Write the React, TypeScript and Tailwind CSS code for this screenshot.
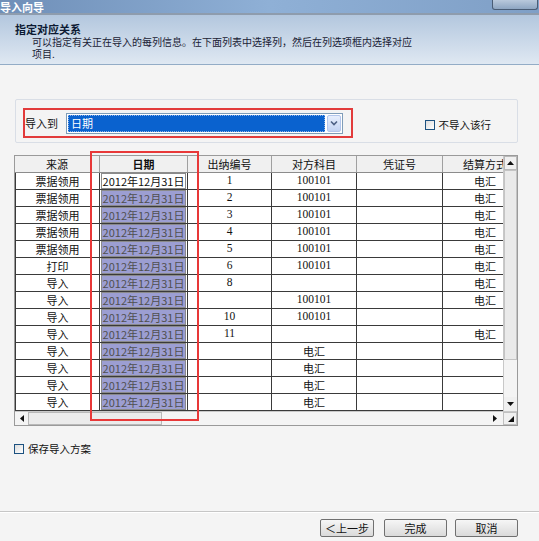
import React from "react";

const CJK = "font-['Noto_Sans_CJK_SC','Liberation_Sans',sans-serif]";
const SERIF = "font-['Liberation_Serif','Noto_Sans_CJK_SC',serif]";

type Row = [string, string, string, string];
const rows: Row[] = [
  ["票据领用", "1", "100101", "电汇"],
  ["票据领用", "2", "100101", "电汇"],
  ["票据领用", "3", "100101", "电汇"],
  ["票据领用", "4", "100101", "电汇"],
  ["票据领用", "5", "100101", "电汇"],
  ["打印", "6", "100101", "电汇"],
  ["导入", "8", "", "电汇"],
  ["导入", "", "100101", "电汇"],
  ["导入", "10", "100101", ""],
  ["导入", "11", "", "电汇"],
  ["导入", "", "电汇", ""],
  ["导入", "", "电汇", ""],
  ["导入", "", "电汇", ""],
  ["导入", "", "电汇", ""],
];

function Val({ v }: { v: string }) {
  const num = /^[0-9]+$/.test(v);
  return <span className={num ? `${SERIF} text-[11.5px]` : `${CJK} text-[11px]`}>{v}</span>;
}

function Check({ label }: { label: string }) {
  return (
    <div className="flex items-center gap-[4px]">
      <div className="w-[10px] h-[10px] border border-[#1c5180] bg-gradient-to-br from-[#dcdcdc] to-[#ffffff]" />
      <span className={`${CJK} text-[10.5px] text-[#111] leading-none`}>{label}</span>
    </div>
  );
}

function Btn({ label, w, className = "" }: { label: string; w: string; className?: string }) {
  return (
    <div
      className={`${w} h-[18px] border border-[#707070] rounded-[2px] bg-gradient-to-b from-[#f6f6f6] to-[#dadada] flex items-center justify-center ${className}`}
    >
      <span className={`${CJK} text-[11px] text-[#111] leading-none`}>{label}</span>
    </div>
  );
}

export default function App() {
  return (
    <div className={`relative w-[539px] h-[541px] overflow-hidden bg-[#f4f4f4] flex flex-col ${CJK}`}>
      {/* Title bar */}
      <div className="h-[13px] flex items-end justify-between bg-gradient-to-r from-[#6f8fb8] via-[#8fb0d6] to-[#7f9fc6] overflow-hidden">
        <span className={`${CJK} text-[11px] font-bold text-white leading-[12px]`}>导入向导</span>
        <div className="self-start w-[46px] h-[10px] mr-[1px] border border-[#4a5d75] border-t-0 rounded-b-[3px] bg-gradient-to-b from-[#b9c9dc] to-[#8ea6c2]" />
      </div>
      <div className="h-[2px] bg-[#8e9cad]" />
      {/* Header */}
      <div className="h-[50px] bg-gradient-to-b from-[#b3c7de] to-[#dfe8f2] border-b border-[#93acc6] pl-[15px] pt-[8px]">
        <div className={`${CJK} text-[11px] font-bold text-[#0c1a33] leading-[12px]`}>指定对应关系</div>
        <div className={`${CJK} text-[10px] text-[#1a2235] leading-[12px] pl-[17px] mt-[1px]`}>
          <div>可以指定有关正在导入的每列信息。在下面列表中选择列，然后在列选项框内选择对应</div>
          <div>项目.</div>
        </div>
      </div>

      {/* Group box */}
      <div className="mt-[34px] ml-[15px] w-[503px] h-[44px] border border-[#d9dee6] rounded-[2px] flex items-start">
        <div className="ml-[7px] mt-[8px] w-[330px] h-[30px] border-2 border-[#e23b3b] flex items-center">
          <span className={`${CJK} text-[11px] text-[#111] leading-none w-[41px]`}>导入到</span>
          <div className="w-[277px] h-[21px] border border-[#7f9db9] bg-white flex items-center p-[1px]">
            <div className="flex-1 h-full bg-[#0a62cf] border border-dotted border-[#8fb3e8] flex items-center pl-[2px]">
              <span className={`${CJK} text-[11px] text-white leading-none`}>日期</span>
            </div>
            <div className="w-[14px] h-[17px] ml-[2px] border border-[#b3c6ec] rounded-[2px] bg-gradient-to-b from-[#e8effd] to-[#c2d3f3] flex items-center justify-center">
              <svg width="8" height="6" viewBox="0 0 8 6">
                <path d="M1 1.5 L4 4.5 L7 1.5" stroke="#4d6185" strokeWidth="1.6" fill="none" />
              </svg>
            </div>
          </div>
        </div>
        <div className="ml-auto mr-[26px] mt-[20px]">
          <Check label="不导入该行" />
        </div>
      </div>

      {/* Table */}
      <div className="mt-[12px] ml-[14px] w-[504px] border border-[#9a9a9a] bg-white flex flex-col">
        <div className="flex">
          <div className="w-[488px] flex flex-col">
            {/* Header */}
            <div className="flex h-[17px] bg-[#f0f0f0] border-b border-[#8c8c8c]">
              <div className="w-[85px] border-r border-[#a0a0a0] flex items-center justify-center">
                <span className="text-[11px] leading-none text-[#111]">来源</span>
              </div>
              <div className="w-[88px] border-r border-[#a0a0a0] flex items-center justify-center">
                <span className="text-[11px] font-bold leading-none text-[#111]">日期</span>
              </div>
              <div className="w-[84px] border-r border-[#a0a0a0] flex items-center justify-center">
                <span className="text-[11px] leading-none text-[#111]">出纳编号</span>
              </div>
              <div className="w-[85px] border-r border-[#a0a0a0] flex items-center justify-center">
                <span className="text-[11px] leading-none text-[#111]">对方科目</span>
              </div>
              <div className="w-[86px] border-r border-[#a0a0a0] flex items-center justify-center">
                <span className="text-[11px] leading-none text-[#111]">凭证号</span>
              </div>
              <div className="w-[60px] overflow-hidden flex items-center pl-[20px] whitespace-nowrap">
                <span className="text-[11px] leading-none text-[#111]">结算方式</span>
              </div>
            </div>
            {rows.map((r, i) => (
              <div key={i} className="flex h-[17px] border-b border-[#3a3a3a]">
                <div className="w-[85px] border-l border-r border-[#3a3a3a] flex items-center justify-center">
                  <span className="text-[11px] leading-none text-[#111]">{r[0]}</span>
                </div>
                <div className="w-[88px] border-r border-[#3a3a3a] flex items-center pl-[1px]">
                  <div
                    className={`w-[85px] h-[16px] border border-[#8a8a8a] flex items-center justify-center ${
                      i === 0 ? "bg-white text-[#111]" : "bg-[#9c9ed2] text-[#505050]"
                    }`}
                  >
                    <span className="text-[11px] leading-none whitespace-nowrap">2012年12月31日</span>
                  </div>
                </div>
                <div className="w-[84px] border-r border-[#3a3a3a] flex items-center justify-center text-[#111] leading-none">
                  <Val v={r[1]} />
                </div>
                <div className="w-[85px] border-r border-[#3a3a3a] flex items-center justify-center text-[#111] leading-none">
                  <Val v={r[2]} />
                </div>
                <div className="w-[86px] border-r border-[#3a3a3a]" />
                <div className="w-[60px] flex items-center justify-end pr-[7px] text-[#111] leading-none">
                  <Val v={r[3]} />
                </div>
              </div>
            ))}
          </div>
          {/* Vertical scrollbar */}
          <div className="w-[14px] flex flex-col bg-[#f4f4f4] border-l border-[#c8c8c8]">
            <div className="h-[14px] border border-[#b8b8b8] bg-[#f0f0f0] flex items-center justify-center">
              <svg width="7" height="4" viewBox="0 0 7 4">
                <path d="M0 4 L3.5 0 L7 4 Z" fill="#111" />
              </svg>
            </div>
            <div className="h-[190px] border border-[#c4c4c4] bg-[#eaeaea]" />
            <div className="flex-1" />
            <div className="h-[14px] bg-[#f0f0f0] flex items-center justify-center">
              <svg width="7" height="4" viewBox="0 0 7 4">
                <path d="M0 0 L3.5 4 L7 0 Z" fill="#111" />
              </svg>
            </div>
          </div>
        </div>
        {/* Horizontal scrollbar */}
        <div className="h-[14px] flex bg-[#f4f4f4] border-t border-[#c8c8c8]">
          <div className="w-[13px] flex items-center justify-center">
            <svg width="4" height="7" viewBox="0 0 4 7">
              <path d="M4 0 L0 3.5 L4 7 Z" fill="#111" />
            </svg>
          </div>
          <div className="w-[134px] border border-[#b8b8b8] bg-[#ebebeb]" />
          <div className="flex-1" />
          <div className="w-[13px] flex items-center justify-center">
            <svg width="4" height="7" viewBox="0 0 4 7">
              <path d="M0 0 L4 3.5 L0 7 Z" fill="#111" />
            </svg>
          </div>
          <div className="w-[14px] ml-[2px] border border-[#c0c0c0] bg-[#f0f0f0] flex items-end justify-end p-[2px]">
            <svg width="6" height="6" viewBox="0 0 6 6">
              <path d="M6 0 L6 6 L0 6 Z" fill="#111" />
            </svg>
          </div>
        </div>
      </div>

      {/* Save option */}
      <div className="mt-[18px] ml-[14px]">
        <Check label="保存导入方案" />
      </div>

      <div className="flex-1" />

      {/* Footer */}
      <div className="h-[30px] border-t border-[#c6c6c6] shadow-[inset_0_1px_0_#ffffff] flex items-start pt-[7px] pl-[320px]">
        <Btn label="＜上一步" w="w-[54px]" />
        <Btn label="完成" w="w-[63px]" className="ml-[10px]" />
        <Btn label="取消" w="w-[63px]" className="ml-[8px]" />
      </div>

      {/* Red annotation around date column */}
      <div className="absolute left-[90px] top-[151px] w-[109px] h-[270px] border-2 border-[#e83838] pointer-events-none" />
    </div>
  );
}
